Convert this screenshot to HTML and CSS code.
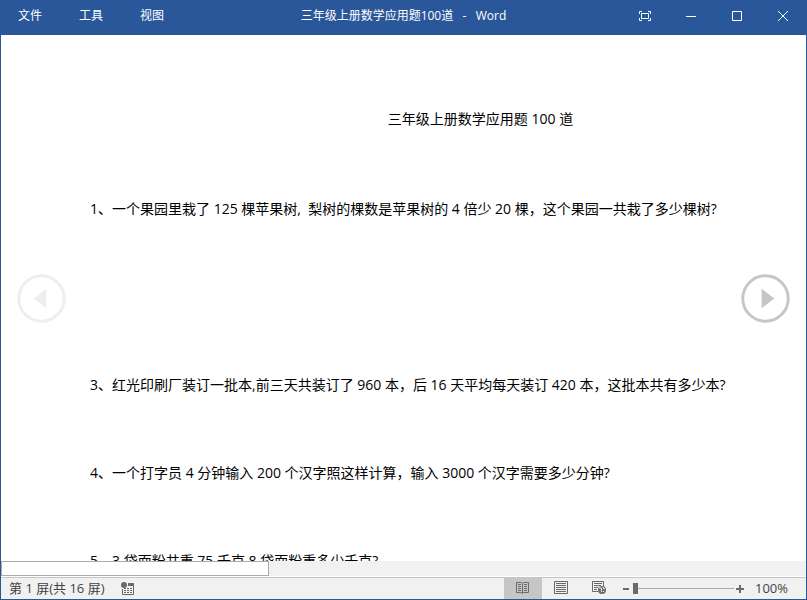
FILE: index.html
```html
<!DOCTYPE html>
<html lang="zh-CN">
  <head>
    <title>三年级上册数学应用题100道 - Word</title>
    <meta charset="utf-8">
    <link rel="stylesheet" href="styles.css">
  </head>
  <body>
  <div class="window">

    <header class="titlebar">
      <nav class="menu">
        <button type="button">文件</button>
        <button type="button">工具</button>
        <button type="button">视图</button>
      </nav>
      <div class="caption">三年级上册数学应用题100道&nbsp; &nbsp;-&nbsp; &nbsp;Word</div>
      <div class="controls">
        <button type="button" aria-label="全屏">
          <svg width="12" height="10" viewBox="0 0 12 10"><path d="M.5 3V.5H3M9 .5h2.500V3M11.500 7v2.500H9M3 9.500H.5V7M2.500 2.500h7v5h-7z"/></svg>
        </button>
        <button type="button" aria-label="最小化">
          <svg width="10" height="10" viewBox="0 0 10 10"><path d="M0 5.500h10"/></svg>
        </button>
        <button type="button" aria-label="最大化">
          <svg width="10" height="10" viewBox="0 0 10 10"><path d="M.5 .5h9v9h-9z"/></svg>
        </button>
        <button type="button" aria-label="关闭">
          <svg width="10" height="10" viewBox="0 0 10 10"><path d="M0 0l10 10M10 0L0 10"/></svg>
        </button>
      </div>
    </header>

    <main class="reader">
      <button type="button" class="turn prev" aria-label="上一屏" disabled>
        <svg width="49" height="49" viewBox="0 0 50 50"><circle cx="25" cy="25" r="23.200"/><path d="M17 25l13-10v20z"/></svg>
      </button>
      <article class="page">
        <h1>三年级上册数学应用题 100 道</h1>
        <p>1、一个果园里栽了 125 棵苹果树,&nbsp; 梨树的棵数是苹果树的 4 倍少 20 棵，这个果园一共栽了多少棵树?</p>
        <p>&nbsp;</p>
        <p>3、红光印刷厂装订一批本,前三天共装订了 960 本，后 16 天平均每天装订 420 本，这批本共有多少本?</p>
        <p>4、一个打字员 4 分钟输入 200 个汉字照这样计算，输入 3000 个汉字需要多少分钟?</p>
        <p>5、3 袋面粉共重 75 千克 8 袋面粉重多少千克?</p>
      </article>
      <button type="button" class="turn next" aria-label="下一屏">
        <svg width="49" height="49" viewBox="0 0 50 50"><circle cx="25" cy="25" r="23.200"/><path d="M34 25L21 15v20z"/></svg>
      </button>
    </main>

    <div class="scroll"><div class="thumb"></div></div>

    <footer class="status">
      <span class="count">第 1 屏(共 16 屏)</span>
      <button type="button" class="macro" aria-label="录制宏">
        <svg width="14" height="14" viewBox="0 0 14 14">
          <path class="line" d="M1.500 7v5.500h11V2.500H7"/>
          <path class="fill" d="M7 1h6v3H7zM3 6h2v1H3zM6 6h2v1H6zM9 6h2v1H9zM3 8h2v1H3zM6 8h2v1H6zM9 8h2v1H9zM3 10h2v1H3zM6 10h2v1H6zM9 10h2v1H9z"/>
          <circle class="fill" cx="3" cy="3" r="3"/>
        </svg>
      </button>
      <div class="views">
        <button type="button" class="active" aria-label="阅读视图">
          <svg width="14" height="14" viewBox="0 0 14 14">
            <path class="line" d="M6.500 2.500L5.500 1.500H.5v10h5l1 1 1-1h5v-10h-5zM6.500 2v11M2 3.500h3M2 5.500h3M2 7.500h3M2 9.500h3M8 3.500h3M8 5.500h3M8 7.500h3M8 9.500h3"/>
          </svg>
        </button>
        <button type="button" aria-label="页面视图">
          <svg width="14" height="14" viewBox="0 0 14 14">
            <path class="line" d="M.5 .5h13v12H.5zM2 2.500h10M2 4.500h10M2 6.500h10M2 8.500h10M2 10.500h10"/>
          </svg>
        </button>
        <button type="button" aria-label="Web 版式视图">
          <svg width="14" height="14" viewBox="0 0 14 14">
            <path class="line" d="M6 10.500H.5V.5h11V5M2 2.500h8M2 4.500h7M2 6.500h4M2 8.500h3"/>
            <circle class="fill" cx="10" cy="9" r="4"/>
            <path class="land" d="M7 7l2 0 1 1-1 1 1 2M11 6l0 1 2 1M12 10l-1 1"/>
          </svg>
        </button>
      </div>
      <div class="zoom">
        <button type="button" aria-label="缩小"><svg width="8" height="8" viewBox="0 0 8 8"><path class="fill" d="M1 3h6v2H1z"/></svg></button>
        <input type="range" min="10" max="500" value="10" aria-label="显示比例">
        <button type="button" aria-label="放大"><svg width="8" height="8" viewBox="0 0 8 8"><path class="fill" d="M0 3h3V0h2v3h3v2H5v3H3V5H0z"/></svg></button>
        <button type="button" class="percent">100%</button>
      </div>
    </footer>

  </div>
  </body>
</html>
```
FILE: styles.css
```css
* {
  box-sizing: border-box;
}
body {
  margin: 0;
  font-family: "Open Sans", "Noto Sans CJK SC", sans-serif;
  font-size: 12px;
}
button {
  margin: 0;
  padding: 0;
  border: 0;
  background: none;
  color: inherit;
  font: inherit;
}
svg {
  display: block;
  fill: none;
}

.window {
  display: flex;
  flex-direction: column;
  height: 100vh;
  border: 1px solid #2a579a;
  border-top: 0;
  background: #fff;
}

/* title bar */
.titlebar {
  display: grid;
  grid-template-columns: 1fr auto 1fr;
  align-items: start;
  height: 35px;
  flex: none;
  background: #2a579a;
  color: #fff;
  line-height: 32px;
}
.menu {
  display: flex;
}
.menu button {
  height: 32px;
  padding: 0 17px;
  margin-right: 3px;
}
.caption {
  white-space: nowrap;
}
.controls {
  display: flex;
  justify-content: flex-end;
}
.controls button {
  display: flex;
  align-items: center;
  justify-content: center;
  width: 46px;
  height: 32px;
}
.controls svg {
  stroke: #fff;
}

/* document */
.reader {
  display: flex;
  flex: 1;
  min-height: 0;
  padding: 0 16px;
  overflow: hidden;
}
.turn {
  flex: none;
  align-self: center;
}
.turn circle {
  stroke: #c6c6c6;
  stroke-width: 3px;
}
.turn path {
  fill: #c6c6c6;
}
.turn.prev circle {
  stroke: #eee;
}
.turn.prev path {
  fill: #eee;
}
.page {
  flex: 1;
  min-width: 0;
  padding: 40px 0 0 24px;
  color: #000;
  font-size: 14px;
  line-height: 88px;
  white-space: nowrap;
}
.page h1 {
  margin: 0 0 2px;
  padding-left: 130px;
  font-size: 14px;
  font-weight: normal;
  text-align: center;
}
.page p {
  margin: 0;
}

.scroll {
  height: 16px;
  flex: none;
  border-bottom: 1px solid #fff;
  background: #f1f1f1;
}
.thumb {
  width: 33.300%;
  height: 15px;
  border: 1px solid #ababab;
  background: #fff;
}

/* status bar */
.status {
  display: flex;
  align-items: center;
  height: 22px;
  flex: none;
  border-top: 1px solid #c6c6c6;
  background: #f1f1f1;
  color: #444;
  font-size: 13px;
  line-height: 18px;
}
.count {
  padding: 0 0 2px 8px;
}
.status .line {
  stroke: #6a6a6a;
}
.status .fill {
  fill: #6a6a6a;
}
.status .land {
  stroke: #f1f1f1;
}
.macro {
  margin-left: 17px;
}
.views {
  display: flex;
  align-self: stretch;
  margin-left: auto;
}
.views button {
  display: flex;
  align-items: center;
  justify-content: center;
  width: 38px;
  padding-bottom: 2px;
}
.views .active {
  background: #c6c6c6;
}
.zoom {
  display: flex;
  align-items: center;
  padding-left: 4px;
}
.zoom input {
  width: 101px;
  height: 12px;
  margin: 0 2px 0 3px;
  appearance: none;
  background: linear-gradient(#ababab, #ababab) center / 100% 1px no-repeat;
}
.zoom input::-webkit-slider-thumb {
  appearance: none;
  width: 5px;
  height: 11px;
  background: #6a6a6a;
}
.percent {
  width: 62px;
  padding: 0 0 2px 11px;
  text-align: left;
}
```
